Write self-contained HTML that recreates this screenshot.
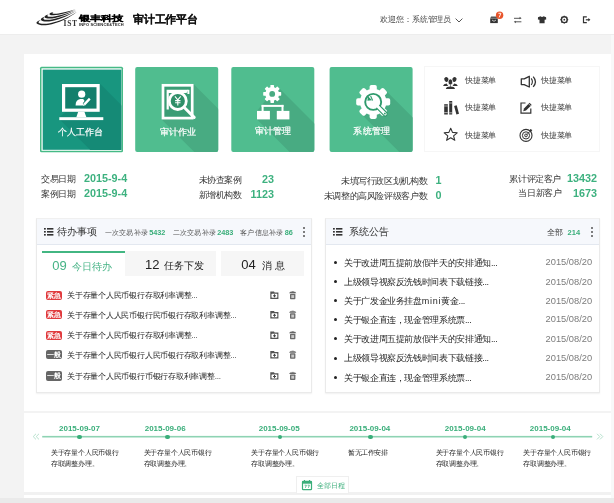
<!DOCTYPE html>
<html><head><meta charset="utf-8"><style>
*{margin:0;padding:0;box-sizing:border-box}
html,body{width:614px;height:503px;overflow:hidden;background:#f3f3f3;font-family:"Liberation Sans",sans-serif;color:#333}
.a{position:absolute;white-space:nowrap}
.k{}
.lab{position:absolute;white-space:nowrap;font-size:9px;letter-spacing:-.36px;color:#333;line-height:10px}
.num{position:absolute;white-space:nowrap;font-size:10.8px;font-weight:bold;color:#3db17f;line-height:12px}
.qt{position:absolute;white-space:nowrap;font-size:8px;letter-spacing:-.3px;color:#444;line-height:9px}
.panel{position:absolute;top:218px;height:175px;background:#fff;border:1px solid #eaeaea;border-top-color:#f0f0f0;box-shadow:0 1px 1.5px rgba(0,0,0,.06)}
.ph{position:absolute;left:0;top:0;width:100%;height:26px;background:#f6f8fc;border-bottom:1px solid #e3e8f0}
.g{color:#3aae7a;font-weight:bold}
.kb{position:absolute;width:2px;height:2px;background:#555;border-radius:1px}
.tab{position:absolute;top:251.3px;height:24.5px;background:#f6f6f6}
.badge{position:absolute;width:16.4px;height:9.3px;border-radius:2px;color:#fff;font-size:7px;line-height:9.3px;text-align:center;letter-spacing:-.3px;text-indent:-.3px;font-weight:bold}
.red{background:#e0393c}.gry{background:#666}
.it{position:absolute;white-space:nowrap;font-size:8px;letter-spacing:-.22px;color:#262626;line-height:9px}
.nt{position:absolute;white-space:nowrap;font-size:9px;letter-spacing:-.36px;color:#262626;line-height:10px}
.nd{position:absolute;white-space:nowrap;font-size:9.3px;color:#7c7c7c;line-height:10px}
.bul{position:absolute;width:3.2px;height:3.2px;border-radius:50%;background:#222}
.td{position:absolute;top:424px;font-size:8px;font-weight:bold;color:#3aae7a;line-height:9px;white-space:nowrap}
.dot{position:absolute;top:434.5px;width:4.5px;height:4.5px;border-radius:50%;background:#3aae7a}
.tt{position:absolute;font-size:7px;letter-spacing:-.2px;color:#262626;line-height:11px;width:70px}
</style></head><body>
<div style="position:absolute;left:0;top:0;width:614px;height:503px;will-change:transform">
<div class="a" style="left:0;top:0;width:614px;height:35px;background:#fff;border-bottom:1px solid #ededed"></div>
<svg class="a" style="left:0;top:0" width="90" height="35" viewBox="0 0 90 35">
<g fill="#222">
<path d="M37 23.8 C35.5 22.6 37.5 20.8 41 19.8 C34.5 23.5 42 24.8 50 23.2 C60 21.2 70 16.5 77 11.8 C70 17.8 58 23.4 48 25 C42 25.9 38.5 25 37 23.8 Z"/>
<path d="M41.2 20.2 C40.2 19 42 17.6 45 16.8 C40.5 19.8 46.5 20.6 53 19.2 C62 17.2 70 14 76.5 10.8 C70 15 61 19.2 52 21 C46 22.1 42.4 21.4 41.2 20.2 Z"/>
<path d="M44.8 17.4 C44 16.4 45.6 15.2 48.6 14.5 C45 16.9 50 17.4 55.5 16.3 C63 14.8 70 12.5 76 10 C70 13.2 62.5 16.4 55 17.9 C49.5 19 45.8 18.4 44.8 17.4 Z"/>
<path d="M49.5 14.4 C49 13.6 50.6 12.6 53.5 12 C50.5 13.9 54.5 14.2 58.5 13.5 C65 12.3 70.5 10.8 75.5 9.2 C70.5 11.4 64.5 13.6 58.5 14.8 C53.5 15.7 50.3 15.2 49.5 14.4 Z"/>
</g></svg>
<div class="a" style="left:63.5px;top:19.3px;font-family:'Liberation Serif',serif;font-size:7.6px;font-weight:bold;color:#333;letter-spacing:.7px;line-height:9px">IST</div>
<div class="a" style="left:78.5px;top:14.6px;font-size:11px;font-weight:bold;color:#000;-webkit-text-stroke:.35px #000;transform:scaleY(.7);transform-origin:0 0;line-height:11px">银丰科技</div>
<div class="a" style="left:79px;top:23px;font-size:4px;font-weight:bold;color:#222;line-height:4px;letter-spacing:.15px">INFO SCIENCE&amp;TECH</div>
<div class="a" style="left:133px;top:12.5px;font-size:11px;letter-spacing:-.2px;font-weight:bold;color:#111;line-height:13px;-webkit-text-stroke:.1px #111">审计工作平台</div>
<div class="a k" style="left:380px;top:15px;font-size:8px;letter-spacing:-.08px;color:#444;line-height:10px">欢迎您：系统管理员</div>
<svg class="a" style="left:455px;top:17.5px" width="8" height="5" viewBox="0 0 8 5"><path d="M.6 .6 L4 4 L7.4 .6" fill="none" stroke="#555" stroke-width="1"/></svg>
<svg class="a" style="left:0;top:0" width="614" height="35" viewBox="0 0 614 35">
<path d="M490.2 18.5 H497.8 V23.1 H490.2 Z" fill="#333"/>
<path d="M491 16.6 H497 L497.8 18.5 H490.2 Z" fill="#555"/>
<path d="M492 20 L494 21.3 L496 20" stroke="#fff" stroke-width=".7" fill="none"/>
<circle cx="499.6" cy="15.3" r="3.7" fill="#e8552b"/>
<path d="M498.4 13.3 H500.9 L499.2 17.4" stroke="#fff" stroke-width=".9" fill="none"/>
<g fill="none" stroke="#444" stroke-width=".9">
<path d="M514 18.3 H520"/><path d="M515.5 21.8 H521.4"/>
</g>
<path d="M519.6 16.8 L521.6 18.3 L519.6 19.3 Z M515.8 20.8 L513.8 21.8 L515.8 23.2 Z" fill="#444"/>
<path d="M540.5 16.3 L538 17.3 L537.9 19.6 L539.5 19.8 V23.2 H544.6 V19.8 L546.2 19.6 L546.1 17.3 L543.6 16.3 Q542 17.8 540.5 16.3 Z" fill="#333"/>
<g transform="translate(564.3 19.7)">
<circle r="2.9" fill="none" stroke="#333" stroke-width="1.4"/>
<g stroke="#333" stroke-width="1.3"><path d="M0 -3.9 V-2.6 M0 3.9 V2.6 M-3.9 0 H-2.6 M3.9 0 H2.6 M-2.8 -2.8 L-1.9 -1.9 M2.8 2.8 L1.9 1.9 M-2.8 2.8 L-1.9 1.9 M2.8 -2.8 L1.9 -1.9"/></g>
<circle r=".9" fill="#333"/>
</g>
<g fill="none" stroke="#333" stroke-width="1.2">
<path d="M586.8 16.9 H583.5 V22.6 H586.8"/>
<path d="M585.8 19.8 H589.2"/>
</g>
<path d="M588.3 18 L590.4 19.8 L588.3 21.6 Z" fill="#333"/>
</svg>
<div class="a" style="left:24px;top:53.8px;width:587px;height:357.4px;background:#fff"></div>
<div class="a" style="left:24px;top:413.2px;width:587px;height:84.6px;background:#fff"></div>
<div class="a" style="left:24px;top:492.2px;width:587px;height:2.6px;background:#f1f1f1"></div>
<div class="a" style="left:0;top:497.8px;width:614px;height:6px;background:#eaeaea"></div>
<div class="a" style="left:610.5px;top:35px;width:4px;height:463px;background:#f8f8f8"></div>
<svg class="a" style="left:0;top:0" width="614" height="160" viewBox="0 0 614 160">
<defs>
<clipPath id="k1"><rect x="42.7" y="69.7" width="78.6" height="80.2"/></clipPath>
<clipPath id="k2"><rect x="135.2" y="67" width="83" height="85" rx="2"/></clipPath>
<clipPath id="k3"><rect x="231.3" y="67" width="83" height="85" rx="2"/></clipPath>
<clipPath id="k4"><rect x="329.6" y="67" width="83" height="85" rx="2"/></clipPath>
</defs>
<rect x="40" y="66.8" width="83" height="85.5" rx="1.5" fill="#46ba86"/>
<rect x="41.5" y="68.3" width="80" height="82.5" fill="#fff"/>
<rect x="42.7" y="69.6" width="78.6" height="80.2" fill="#18967f"/>
<g clip-path="url(#k1)"><polygon points="100.3,84 200.3,184 160.5,220.2 60.5,120.2 59.3,117.2" fill="#158a76"/></g>
<rect x="63.6" y="85.6" width="34.5" height="24.6" fill="#137f6c" stroke="#fff" stroke-width="3.2"/>
<polygon points="78.2,111.8 84.4,111.8 86.4,117.3 76.3,117.3" fill="#fff"/>
<rect x="59.3" y="117.2" width="44" height="2.9" fill="#fff"/>
<circle cx="81.7" cy="94.2" r="3.6" fill="#fff"/>
<path d="M75.6 105.5 Q75.6 99.7 80.2 99.1 L83.2 99.1 L84.6 101 L82.8 105.5 Z" fill="#fff"/>
<path d="M84.2 104.6 L89.8 98.6" stroke="#137f6c" stroke-width="4"/>
<path d="M84.2 104.6 L89.8 98.6" stroke="#fff" stroke-width="2.3"/>
<path d="M82.8 106 L83.6 103.8 L85 105.2 Z" fill="#fff"/>

<rect x="135.2" y="67" width="83" height="85" rx="2" fill="#50bd8f"/>
<g clip-path="url(#k2)"><polygon points="193.5,84 293.5,184 261.7,219.4 161.7,119.4" fill="#48ab82"/></g>
<rect x="163" y="85.3" width="29.2" height="32.8" fill="#3a9d75" stroke="#fff" stroke-width="2.7"/>
<path d="M166.6 89.8 H188.4 L186.5 93 H168.3 Z" fill="#fff"/>
<path d="M166.6 89.8 V109.5 H168.8 V92 Z" fill="#fff"/>
<path d="M188.4 89.8 V94" stroke="#fff" stroke-width="2"/>
<circle cx="177.8" cy="101" r="8.5" fill="#2f8f69" stroke="#fff" stroke-width="2.8"/>
<path d="M184.8 108 L194.2 117.4" stroke="#fff" stroke-width="3" stroke-linecap="round"/>
<path d="M174.9 96.4 L177.8 99.8 L180.7 96.4 M177.8 99.8 V105.6 M175.1 100.6 H180.5 M175.1 102.8 H180.5" stroke="#fff" stroke-width="1.1" fill="none"/>

<rect x="231.3" y="67" width="83" height="85" rx="2" fill="#50bd8f"/>
<g clip-path="url(#k3)"><polygon points="278.6,87.5 378.6,187.5 357,219.4 257,119.4 257,110.9 261.6,104.9 265.8,100.3" fill="#48ab82"/></g>
<g transform="translate(272.2 93.9)" fill="#fff">
<circle r="6.9"/>
<rect x="-1.8" y="-9" width="3.6" height="4" rx=".6" transform="rotate(0)"/><rect x="-1.8" y="-9" width="3.6" height="4" rx=".6" transform="rotate(45)"/><rect x="-1.8" y="-9" width="3.6" height="4" rx=".6" transform="rotate(90)"/><rect x="-1.8" y="-9" width="3.6" height="4" rx=".6" transform="rotate(135)"/><rect x="-1.8" y="-9" width="3.6" height="4" rx=".6" transform="rotate(180)"/><rect x="-1.8" y="-9" width="3.6" height="4" rx=".6" transform="rotate(225)"/><rect x="-1.8" y="-9" width="3.6" height="4" rx=".6" transform="rotate(270)"/><rect x="-1.8" y="-9" width="3.6" height="4" rx=".6" transform="rotate(315)"/>
<circle r="2.9" fill="#48ab82"/>
</g>
<rect x="261.6" y="104.9" width="21.9" height="2" fill="#fff"/>
<rect x="261.6" y="104.9" width="2" height="6.5" fill="#fff"/>
<rect x="281.5" y="104.9" width="2" height="6.5" fill="#fff"/>
<rect x="257" y="110.9" width="12.9" height="8.5" fill="#fff"/>
<rect x="276.8" y="110.9" width="12.6" height="8.5" fill="#fff"/>

<rect x="329.6" y="67" width="83" height="85" rx="2" fill="#50bd8f"/>
<g clip-path="url(#k4)"><polygon points="385.2,89.9 485.2,189.9 461.2,213.9 361.2,113.9" fill="#48ab82"/></g>
<g transform="translate(373.2 101.9)" fill="#fff">
<circle r="13.2"/>
<rect x="-3.6" y="-17" width="7.2" height="6" rx="1.8" transform="rotate(0)"/><rect x="-3.6" y="-17" width="7.2" height="6" rx="1.8" transform="rotate(45)"/><rect x="-3.6" y="-17" width="7.2" height="6" rx="1.8" transform="rotate(90)"/><rect x="-3.6" y="-17" width="7.2" height="6" rx="1.8" transform="rotate(135)"/><rect x="-3.6" y="-17" width="7.2" height="6" rx="1.8" transform="rotate(180)"/><rect x="-3.6" y="-17" width="7.2" height="6" rx="1.8" transform="rotate(225)"/><rect x="-3.6" y="-17" width="7.2" height="6" rx="1.8" transform="rotate(270)"/><rect x="-3.6" y="-17" width="7.2" height="6" rx="1.8" transform="rotate(315)"/>
<circle r="8" fill="#fff" stroke="#2f9a6c" stroke-width="1.9"/>
<path d="M-5.2 -5.6 L-1.2 -1.6 L-5.8 -1.2 Z" fill="#2f9a6c"/>
<path d="M-2.6 -6 L-0.6 -1.4" stroke="#2f9a6c" stroke-width="1.1"/>
<g transform="rotate(45)"><path d="M6.5 -2 H17 A2 2 0 0 1 17 2 H6.5" fill="#fff" stroke="#2f9a6c" stroke-width="1.1"/><circle cx="16.5" cy="0" r=".9" fill="#2f9a6c"/></g>
</g>
</svg>
<div class="a" style="left:39px;top:126px;width:83px;text-align:center;color:#fff;font-size:9px;letter-spacing:.1px;line-height:12px;-webkit-text-stroke:.2px #fff;">个人工作台</div>
<div class="a" style="left:136.7px;top:125.6px;width:83px;text-align:center;color:#fff;font-size:9px;letter-spacing:.1px;line-height:12px;-webkit-text-stroke:.2px #fff;">审计作业</div>
<div class="a" style="left:231.9px;top:125.3px;width:83px;text-align:center;color:#fff;font-size:9px;letter-spacing:.1px;line-height:12px;-webkit-text-stroke:.2px #fff;">审计管理</div>
<div class="a" style="left:330.2px;top:125.3px;width:83px;text-align:center;color:#fff;font-size:9px;letter-spacing:.1px;line-height:12px;-webkit-text-stroke:.2px #fff;">系统管理</div>
<div class="a" style="left:424px;top:66px;width:175.5px;height:86px;border:1px solid #f6f6f6"></div>
<svg class="a" style="left:0;top:0" width="614" height="160" viewBox="0 0 614 160">
<g fill="#333">
<ellipse cx="446.4" cy="79.4" rx="2.1" ry="2.5" transform="rotate(-25 446.4 79.4)"/>
<ellipse cx="454.4" cy="79.4" rx="2.1" ry="2.5" transform="rotate(25 454.4 79.4)"/>
<path d="M443 86 Q443.6 83.5 446.6 83.5 L448.2 86 Z"/>
<path d="M457.8 86 Q457.2 83.5 454.2 83.5 L452.6 86 Z"/>
<path d="M445.8 88.9 Q446.4 86.5 450.4 86.5 Q454.4 86.5 455 88.9 Z"/>
<rect x="450" y="84.6" width=".8" height="2"/>
</g>
<ellipse cx="450.4" cy="82" rx="2.3" ry="3" fill="#333" stroke="#fff" stroke-width=".7"/>
<g fill="#333">
<rect x="444.2" y="104.2" width="3.6" height="10.3"/>
<rect x="449.2" y="101" width="3" height="13.5"/>
<path d="M454.1 106 L456.7 105.2 L459 113.7 L456.4 114.5 Z"/>
</g>
<g stroke="#fff" stroke-width=".6"><path d="M444.2 106 H447.8 M444.2 112.6 H447.8 M449.2 103 H452.2 M449.2 112.8 H452.2"/></g>
<path d="M450.7 128.2 L452.5 132.4 L457.2 132.8 L453.6 135.8 L454.8 140.3 L450.7 137.8 L446.6 140.3 L447.8 135.8 L444.2 132.8 L448.9 132.4 Z" fill="none" stroke="#333" stroke-width="1.1" stroke-linejoin="round"/>
<g fill="none" stroke="#333" stroke-width="1.1">
<path d="M521.3 78.8 H524.2 L529.3 76.3 V87 L524.2 84.6 H521.3 Z" stroke-linejoin="round" stroke-width="1.3"/>
<path d="M531.2 78.4 Q533.6 81.7 531.2 85"/>
<path d="M533.2 76.6 Q537.6 81.7 533.2 86.8" stroke-width="1.3"/>
</g>
<g fill="none" stroke="#333" stroke-width="1.2">
<path d="M525.5 103 H521 V113.2 H530.8 V108.6"/>
</g>
<path d="M523.2 111.3 L524 108.5 L529.6 102.8 L531.7 104.9 L526 110.5 Z" fill="#333"/>
<path d="M528.6 103.8 L530.7 105.9" stroke="#fff" stroke-width=".6"/>
<g fill="none" stroke="#333">
<circle cx="526" cy="135.4" r="6" stroke-width="1.1"/>
<circle cx="526" cy="135.4" r="3.6" stroke-width="1"/>
<circle cx="526" cy="135.4" r="1.4" stroke-width=".9"/>
<path d="M526 135.4 L530.2 131.2" stroke-width=".9"/>
</g>
<path d="M529.2 131 L530.3 128.9 L532.3 130.1 L530.9 132.3 Z" fill="#333"/>
</svg>
<div class="qt" style="left:465.3px;top:76.3px">快捷菜单</div>
<div class="qt" style="left:541.3px;top:76.3px">快捷菜单</div>
<div class="qt" style="left:465.3px;top:103px">快捷菜单</div>
<div class="qt" style="left:541.3px;top:103px">快捷菜单</div>
<div class="qt" style="left:465.3px;top:130.8px">快捷菜单</div>
<div class="qt" style="left:541.3px;top:130.8px">快捷菜单</div>
<div class="lab" style="left:41px;top:174px">交易日期</div>
<div class="lab" style="left:41px;top:188.6px">案例日期</div>
<div class="num" style="left:84px;top:171.8px">2015-9-4</div>
<div class="num" style="left:84px;top:186.8px">2015-9-4</div>
<div class="lab" style="left:198.5px;top:175.3px">未协查案例</div>
<div class="lab" style="left:198.5px;top:190.2px">新增机构数</div>
<div class="num" style="right:340px;top:173px">23</div>
<div class="num" style="right:340px;top:188px">1123</div>
<div class="lab" style="right:186.7px;top:175.6px">未填写行政区划机构数</div>
<div class="lab" style="right:186.7px;top:190.6px">未调整的高风险评级客户数</div>
<div class="num" style="left:435.5px;top:174px">1</div>
<div class="num" style="left:435.5px;top:189px">0</div>
<div class="lab" style="left:509.3px;top:173.6px">累计评定客户</div>
<div class="lab" style="right:52.5px;top:188.1px">当日新客户</div>
<div class="num" style="right:17px;top:171.6px">13432</div>
<div class="num" style="right:17px;top:186.6px">1673</div>
<div class="panel" style="left:36px;width:275.7px"><div class="ph"></div></div>
<div class="panel" style="left:325px;width:275px"><div class="ph"></div></div>
<svg class="a" style="left:0;top:0" width="614" height="400" viewBox="0 0 614 400"><g transform="translate(44 228)" fill="#333"><rect x="0" y="0" width="1.8" height="1.6"/><rect x="0" y="3" width="1.8" height="1.6"/><rect x="0" y="6" width="1.8" height="1.6"/><rect x="3" y="0" width="6.4" height="1.6"/><rect x="3" y="3" width="6.4" height="1.6"/><rect x="3" y="6" width="6.4" height="1.6"/></g><g transform="translate(333 228)" fill="#333"><rect x="0" y="0" width="1.8" height="1.6"/><rect x="0" y="3" width="1.8" height="1.6"/><rect x="0" y="6" width="1.8" height="1.6"/><rect x="3" y="0" width="6.4" height="1.6"/><rect x="3" y="3" width="6.4" height="1.6"/><rect x="3" y="6" width="6.4" height="1.6"/></g></svg>
<div class="a k" style="left:57px;top:225.8px;font-size:10px;letter-spacing:.08px;color:#333;line-height:12px">待办事项</div>
<div class="a" style="left:104.8px;top:228.5px;font-size:7px;letter-spacing:.2px;color:#555;line-height:8px;">一次交易补录<span class="g" style="font-size:7.3px;letter-spacing:0;margin-left:1.2px">5432</span></div>
<div class="a" style="left:172.8px;top:228.5px;font-size:7px;letter-spacing:.2px;color:#555;line-height:8px;">二次交易补录<span class="g" style="font-size:7.3px;letter-spacing:0;margin-left:1.2px">2483</span></div>
<div class="a" style="left:240.3px;top:228.5px;font-size:7px;letter-spacing:.2px;color:#555;line-height:8px;">客户信息补录<span class="g" style="font-size:7.3px;letter-spacing:0;margin-left:1.2px">86</span></div>
<div class="kb" style="left:302.6px;top:226.7px"></div>
<div class="kb" style="left:302.6px;top:230.6px"></div>
<div class="kb" style="left:302.6px;top:234.5px"></div>
<div class="a" style="left:41.6px;top:250.7px;width:83.5px;height:2px;background:#42b682"></div>
<div class="tab" style="left:125.4px;width:91.1px"></div>
<div class="tab" style="left:220.9px;width:82.7px"></div>
<div class="a" style="left:52.2px;top:258.8px;font-size:13px;color:#45b385;line-height:14px">09</div>
<div class="a" style="left:72.2px;top:260.5px;font-size:10px;letter-spacing:.1px;color:#45b385;line-height:12px;">今日待办</div>
<div class="a" style="left:145px;top:258.3px;font-size:13px;color:#222;line-height:14px">12</div>
<div class="a k" style="left:163.6px;top:259.5px;font-size:10px;letter-spacing:.3px;color:#222;line-height:12px">任务下发</div>
<div class="a" style="left:241.2px;top:258.3px;font-size:13px;color:#222;line-height:14px">04</div>
<div class="a k" style="left:262px;top:259.5px;font-size:10px;letter-spacing:.3px;color:#222;line-height:12px">消 息</div>
<div class="badge red" style="left:46.1px;top:290.6px">紧急</div>
<div class="it" style="left:67px;top:291.40000000000003px">关于存量个人民币银行存取利率调整...</div>
<div class="badge red" style="left:46.1px;top:310.1px">紧急</div>
<div class="it" style="left:67px;top:310.90000000000003px">关于存量个人人民币银行民币银行存取利率调整...</div>
<div class="badge red" style="left:46.1px;top:330.6px">紧急</div>
<div class="it" style="left:67px;top:331.40000000000003px">关于存量个人民币银行存取利率调整...</div>
<div class="badge gry" style="left:46.1px;top:350.1px">一般</div>
<div class="it" style="left:67px;top:350.90000000000003px">关于存量个人民币银行人民币银行存取利率调整...</div>
<div class="badge gry" style="left:46.1px;top:371.3px">一般</div>
<div class="it" style="left:67px;top:372.1px">关于存量个人民币银行币银行存取利率调整...</div>
<svg class="a" style="left:0;top:0" width="614" height="400" viewBox="0 0 614 400"><g transform="translate(270 290.90000000000003)"><path d="M.3 .7 H4 L4.6 1.6 H8.4 V8 H.3 Z" fill="#555"/><rect x="1.5" y="2.9" width="5.8" height="3.9" rx=".6" fill="#fff"/><path d="M4.5 3.4 V6.4 M3 4.9 H6" stroke="#444" stroke-width="1"/></g><g transform="translate(289 290.90000000000003)"><path d="M2.6 .3 H4.8 V1 H2.6 Z" fill="#777"/><path d="M1.2 .9 H6.2 L7.3 2.4 H.1 Z" fill="#666"/><rect x="1" y="2.8" width="5.4" height="5.6" rx=".8" fill="#6a6a6a"/><rect x="2.3" y="4.2" width="2.8" height="2.9" fill="#c8c8c8"/></g><g transform="translate(270 310.40000000000003)"><path d="M.3 .7 H4 L4.6 1.6 H8.4 V8 H.3 Z" fill="#555"/><rect x="1.5" y="2.9" width="5.8" height="3.9" rx=".6" fill="#fff"/><path d="M4.5 3.4 V6.4 M3 4.9 H6" stroke="#444" stroke-width="1"/></g><g transform="translate(289 310.40000000000003)"><path d="M2.6 .3 H4.8 V1 H2.6 Z" fill="#777"/><path d="M1.2 .9 H6.2 L7.3 2.4 H.1 Z" fill="#666"/><rect x="1" y="2.8" width="5.4" height="5.6" rx=".8" fill="#6a6a6a"/><rect x="2.3" y="4.2" width="2.8" height="2.9" fill="#c8c8c8"/></g><g transform="translate(270 330.90000000000003)"><path d="M.3 .7 H4 L4.6 1.6 H8.4 V8 H.3 Z" fill="#555"/><rect x="1.5" y="2.9" width="5.8" height="3.9" rx=".6" fill="#fff"/><path d="M4.5 3.4 V6.4 M3 4.9 H6" stroke="#444" stroke-width="1"/></g><g transform="translate(289 330.90000000000003)"><path d="M2.6 .3 H4.8 V1 H2.6 Z" fill="#777"/><path d="M1.2 .9 H6.2 L7.3 2.4 H.1 Z" fill="#666"/><rect x="1" y="2.8" width="5.4" height="5.6" rx=".8" fill="#6a6a6a"/><rect x="2.3" y="4.2" width="2.8" height="2.9" fill="#c8c8c8"/></g><g transform="translate(270 350.40000000000003)"><path d="M.3 .7 H4 L4.6 1.6 H8.4 V8 H.3 Z" fill="#555"/><rect x="1.5" y="2.9" width="5.8" height="3.9" rx=".6" fill="#fff"/><path d="M4.5 3.4 V6.4 M3 4.9 H6" stroke="#444" stroke-width="1"/></g><g transform="translate(289 350.40000000000003)"><path d="M2.6 .3 H4.8 V1 H2.6 Z" fill="#777"/><path d="M1.2 .9 H6.2 L7.3 2.4 H.1 Z" fill="#666"/><rect x="1" y="2.8" width="5.4" height="5.6" rx=".8" fill="#6a6a6a"/><rect x="2.3" y="4.2" width="2.8" height="2.9" fill="#c8c8c8"/></g><g transform="translate(270 371.6)"><path d="M.3 .7 H4 L4.6 1.6 H8.4 V8 H.3 Z" fill="#555"/><rect x="1.5" y="2.9" width="5.8" height="3.9" rx=".6" fill="#fff"/><path d="M4.5 3.4 V6.4 M3 4.9 H6" stroke="#444" stroke-width="1"/></g><g transform="translate(289 371.6)"><path d="M2.6 .3 H4.8 V1 H2.6 Z" fill="#777"/><path d="M1.2 .9 H6.2 L7.3 2.4 H.1 Z" fill="#666"/><rect x="1" y="2.8" width="5.4" height="5.6" rx=".8" fill="#6a6a6a"/><rect x="2.3" y="4.2" width="2.8" height="2.9" fill="#c8c8c8"/></g></svg>
<div class="a k" style="left:349px;top:225.8px;font-size:10px;color:#333;line-height:12px">系统公告</div>
<div class="a k" style="left:547px;top:227.5px;font-size:8px;letter-spacing:-.1px;color:#444;line-height:9px">全部</div>
<div class="a g" style="left:567.6px;top:227.6px;font-size:7.5px;line-height:9px">214</div>
<div class="kb" style="left:591.3px;top:227.3px"></div>
<div class="kb" style="left:591.3px;top:231.4px"></div>
<div class="kb" style="left:591.3px;top:235.4px"></div>
<div class="bul" style="left:333.8px;top:261.0px"></div>
<div class="nt" style="left:344px;top:257.6px">关于改进周五提前放假半天的安排通知...</div>
<div class="nd" style="left:545.6px;top:257.40000000000003px">2015/08/20</div>
<div class="bul" style="left:333.8px;top:280.2px"></div>
<div class="nt" style="left:344px;top:276.8px">上级领导视察反洗钱时间表下载链接...</div>
<div class="nd" style="left:545.6px;top:276.6px">2015/08/20</div>
<div class="bul" style="left:333.8px;top:299.2px"></div>
<div class="nt" style="left:344px;top:295.8px">关于广发金业务挂盘<span style="letter-spacing:.75px">mini</span>黄金...</div>
<div class="nd" style="left:545.6px;top:295.6px">2015/08/20</div>
<div class="bul" style="left:333.8px;top:318.0px"></div>
<div class="nt" style="left:344px;top:314.6px">关于银企直连，现金管理系统票...</div>
<div class="nd" style="left:545.6px;top:314.40000000000003px">2015/08/20</div>
<div class="bul" style="left:333.8px;top:337.2px"></div>
<div class="nt" style="left:344px;top:333.8px">关于改进周五提前放假半天的安排通知...</div>
<div class="nd" style="left:545.6px;top:333.6px">2015/08/20</div>
<div class="bul" style="left:333.8px;top:356.59999999999997px"></div>
<div class="nt" style="left:344px;top:353.2px">上级领导视察反洗钱时间表下载链接...</div>
<div class="nd" style="left:545.6px;top:353.0px">2015/08/20</div>
<div class="bul" style="left:333.8px;top:376.0px"></div>
<div class="nt" style="left:344px;top:372.6px">关于银企直连，现金管理系统票...</div>
<div class="nd" style="left:545.6px;top:372.40000000000003px">2015/08/20</div>
<svg class="a" style="left:0;top:400px" width="614" height="103" viewBox="0 400 614 103"><path d="M36 433.8 L33.2 436.6 L36 439.4 M39 433.8 L36.2 436.6 L39 439.4" fill="none" stroke="#b8e2ce" stroke-width="1"/><path d="M597 433.8 L599.8 436.6 L597 439.4 M600 433.8 L602.8 436.6 L600 439.4" fill="none" stroke="#b8e2ce" stroke-width="1"/><rect x="42.2" y="435.9" width="550" height="1.6" fill="#8ed3b3"/></svg>
<div class="td" style="left:59px">2015-09-07</div>
<div class="dot" style="left:77.45px"></div>
<div class="tt" style="left:50.8px;top:447.3px">关于存量个人民币银行存取调整办理。</div>
<div class="td" style="left:144.7px">2015-09-06</div>
<div class="dot" style="left:165.25px"></div>
<div class="tt" style="left:143.7px;top:447.3px">关于存量个人民币银行存取调整办理。</div>
<div class="td" style="left:258.7px">2015-09-05</div>
<div class="dot" style="left:277.55px"></div>
<div class="tt" style="left:251.2px;top:447.3px">关于存量个人民币银行存取调整办理。</div>
<div class="td" style="left:349.4px">2015-09-04</div>
<div class="dot" style="left:368.45px"></div>
<div class="tt" style="left:348px;top:447.3px"><span style="letter-spacing:-.45px">暂无工作安排</span></div>
<div class="td" style="left:444.7px">2015-09-04</div>
<div class="dot" style="left:462.75px"></div>
<div class="tt" style="left:435.5px;top:447.3px">关于存量个人民币银行存取调整办理。</div>
<div class="td" style="left:529.8px">2015-09-04</div>
<div class="dot" style="left:550.75px"></div>
<div class="tt" style="left:523.3px;top:447.3px">关于存量个人民币银行存取调整办理。</div>
<div class="a" style="left:296.3px;top:476px;width:52.7px;height:17.6px;border:1px solid #efefef;background:#fff"></div>
<svg class="a" style="left:301px;top:479px" width="12" height="12" viewBox="0 0 12 12">
<rect x="1.5" y="2.3" width="9" height="8.4" rx=".8" fill="none" stroke="#3aae7a" stroke-width="1.2"/>
<rect x="1.5" y="2.3" width="9" height="2.4" fill="#3aae7a"/>
<path d="M3.5 1 V3 M8.5 1 V3" stroke="#3aae7a" stroke-width="1.1"/>
<path d="M3.6 6.2 H5.4 L4.4 8.8 M6.6 6.2 H8.4 L7.4 8.8" stroke="#3aae7a" stroke-width=".8" fill="none"/>
</svg>
<div class="a k" style="left:317px;top:480.5px;font-size:7px;letter-spacing:-.1px;color:#3aae7a;line-height:9px">全部日程</div>
</div></body></html>
